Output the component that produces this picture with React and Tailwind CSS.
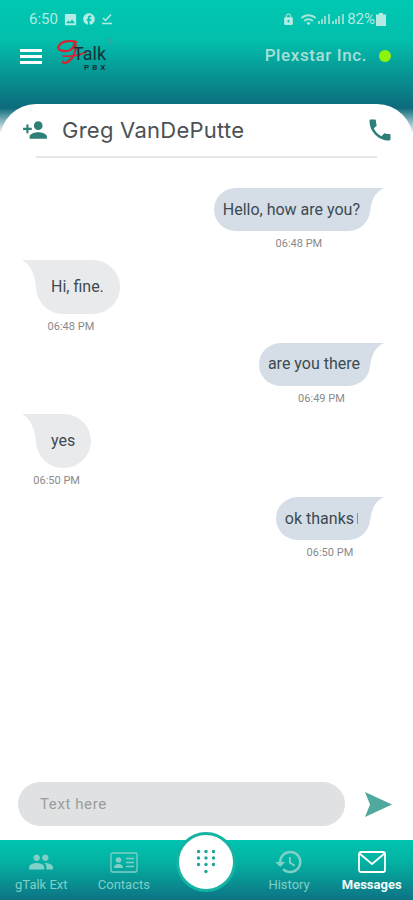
import React from "react";
import { MdPersonAdd, MdLocalPhone, MdPeople, MdHistory, MdFacebook, MdImage, MdLock, MdWifi } from "react-icons/md";

const messages = [
  { id: 1, mine: true, text: "Hello, how are you?", time: "06:48 PM" },
  { id: 2, mine: false, text: "Hi, fine.", time: "06:48 PM" },
  { id: 3, mine: true, text: "are you there", time: "06:49 PM" },
  { id: 4, mine: false, text: "yes", time: "06:50 PM" },
  { id: 5, mine: true, text: "ok thanks", time: "06:50 PM", cursor: true },
];

function Signal() {
  return (
    <svg width="14" height="12" viewBox="0 0 14 12" fill="#8fdcd0">
      <rect x="1" y="8" width="2" height="3" />
      <rect x="4" y="6" width="2" height="5" />
      <rect x="7" y="3" width="2" height="8" />
      <rect x="11" y="1" width="2" height="10" />
    </svg>
  );
}

function StatusBar() {
  return (
    <div className="flex h-[38px] items-center justify-between pl-[29px] pr-[27px] text-[#b4ebe2]">
      <div className="flex items-center">
        <span className="text-[15px] leading-none">6:50</span>
        <MdImage size={15} className="ml-[5px]" />
        <MdFacebook size={14} className="ml-[4px]" />
        <svg width="12" height="12" viewBox="0 0 12 12" className="ml-[5px]" fill="none" stroke="#b4ebe2" strokeWidth="1.5">
          <path d="M2 5l2.500 2.500L10 1.500" />
          <path d="M1 10.500h10" />
        </svg>
      </div>
      <div className="flex items-center">
        <MdLock size={13} />
        <MdWifi size={17} className="ml-[5px] text-[#a8e6dc]" />
        <Signal />
        <Signal />
        <span className="ml-[2px] text-[15px] leading-none">82%</span>
        <svg width="10" height="13" viewBox="0 0 10 13" className="ml-[1px]" fill="#b4ebe2">
          <path d="M3 0h4v1.500h3V13H0V1.500h3z" />
        </svg>
      </div>
    </div>
  );
}

function Logo() {
  return (
    <div className="relative ml-[15px] h-[34px] w-[52px] font-[Roboto,sans-serif]">
      <svg className="absolute left-0 top-0" width="36" height="32" viewBox="0 0 36 32" fill="none" stroke="#d8232f" strokeWidth="2.200" strokeLinecap="round">
        <path d="M19 3C14 1 4 2 1.500 7.500 0 11 6 13 12 11.500 16 10 18 6 17 3" />
        <path d="M17 3C21 8 18 14 15 19 11 24 7 25 6 23" />
        <path d="M6 17C13 17.500 22 17 29 13" strokeWidth="1.500" />
      </svg>
      <span className="absolute left-[16px] top-[4px] text-[18px] leading-[22px] text-[#17323a]">Talk</span>
      <span className="absolute left-[27px] top-[24px] text-[8px] font-bold leading-[9px] tracking-[3px] text-[#17323a]">PBX</span>
      <span className="absolute left-[50px] top-[-1px] text-[7px] leading-[8px] text-[#4f9c97]">®</span>
    </div>
  );
}

function Tail({ mine, color }) {
  if (mine) {
    return (
      <svg className="absolute right-0 top-0" width="15" height="24" viewBox="0 0 15 24" fill={color}>
        <path d="M0 0H15Q3 5 1 24H0Z" />
      </svg>
    );
  }
  return (
    <svg className="absolute left-0 top-0" width="15" height="28" viewBox="0 0 15 28" fill={color}>
      <path d="M15 0H0Q12 6 14 28H15Z" />
    </svg>
  );
}

function Message({ msg }) {
  const { mine, text, time, cursor } = msg;
  return (
    <div className={`flex w-fit flex-col items-center ${mine ? "self-end" : "self-start"}`}>
      {mine ? (
        <div className="relative pr-[14px]">
          <Tail mine color="#d5dee6" />
          <div className="flex h-[43px] items-center rounded-l-[22px] rounded-br-[22px] bg-[#d5dee6] pl-[9px] pr-[10px] text-[16px] text-[#3c4a52]">
            {text}
            {cursor && <span className="ml-[3px] mr-[2px] h-[11px] w-[1px] bg-[#8a949a]" />}
          </div>
        </div>
      ) : (
        <div className="relative pl-[14px]">
          <Tail color="#e9eaec" />
          <div className="flex h-[54px] items-center rounded-r-[27px] rounded-bl-[27px] bg-[#e9eaec] pl-[15px] pr-[16px] text-[16px] text-[#3f4a50]">
            {text}
          </div>
        </div>
      )}
      <span className="mt-[6px] h-[14px] text-[11px] leading-[14px] text-[#8a8a8a]">{time}</span>
    </div>
  );
}

function ContactsIcon() {
  return (
    <svg width="28" height="21" viewBox="0 0 28 21" fill="none" stroke="#7fd0c6" strokeWidth="1.300">
      <rect x="1" y="1" width="26" height="19" rx="1.500" />
      <circle cx="8.500" cy="8" r="2.800" fill="#7fd0c6" stroke="none" />
      <path d="M4 16c0-3 2-4 4.500-4s4.500 1 4.500 4z" fill="#7fd0c6" stroke="none" />
      <path d="M16 6.500h8M16 10.500h8M16 14.500h8" />
    </svg>
  );
}

function MailIcon() {
  return (
    <svg width="28" height="22" viewBox="0 0 28 22" fill="none" stroke="#ffffff" strokeWidth="1.800">
      <rect x="1" y="1" width="26" height="20" rx="2" />
      <path d="M1.500 2.500L14 13 26.500 2.500" />
    </svg>
  );
}

function DialpadIcon() {
  const dots = [];
  [1.5, 8, 14.5].forEach((y) => {
    [1.5, 9, 16.5].forEach((x) => {
      dots.push(<circle key={`${x}-${y}`} cx={x} cy={y} r="1.700" />);
    });
  });
  return (
    <svg width="18" height="24" viewBox="0 0 18 24" fill="#1fa597">
      {dots}
      <circle cx="9" cy="21.500" r="1.700" />
    </svg>
  );
}

function NavItem({ icon, label, active }) {
  return (
    <div className="flex flex-col items-center">
      <div className="flex h-[22px] items-center justify-center">{icon}</div>
      <span className={`mt-[4px] whitespace-nowrap text-[13px] leading-[16px] ${active ? "font-bold text-[#f2fbfa]" : "text-[#7fd0c6]"}`}>
        {label}
      </span>
    </div>
  );
}

export default function App() {
  return (
    <div className="flex h-[900px] w-[413px] flex-col overflow-hidden bg-white font-[Roboto,sans-serif]">
      {/* Header, runs on behind the card corners */}
      <div className="h-[140px] shrink-0 bg-[linear-gradient(180deg,#00c8b3_0px,#02bfac_40px,#0c6b7c_108px,#ffffff_134px)]">
        <StatusBar />
        <div className="flex h-[36px] items-center pl-[20px] pr-[22px]">
          <div className="flex w-[22px] flex-col gap-[3px]">
            <div className="h-[3px] bg-white" />
            <div className="h-[3px] bg-white" />
            <div className="h-[3px] bg-white" />
          </div>
          <Logo />
          <span className="ml-auto text-[17px] font-medium tracking-[0.6px] text-[#a6e0d8]">Plexstar Inc.</span>
          <span className="ml-[12px] h-[12px] w-[12px] rounded-full bg-[#8ef30b]" />
        </div>
      </div>

      {/* Chat card */}
      <div className="mt-[-36px] flex min-h-0 flex-1 flex-col rounded-t-[36px] bg-white">
        <div className="mx-[36px] flex h-[54px] shrink-0 items-center border-b-2 border-[#e4e6e6]">
          <MdPersonAdd size={26} className="ml-[-14px] text-[#2d7f77]" />
          <span className="ml-[14px] font-[Inter,sans-serif] text-[22px] tracking-[0.25px] text-[#4b5155]">Greg VanDePutte</span>
          <MdLocalPhone size={28} className="ml-auto mr-[-17px] text-[#2d7f77]" />
        </div>

        <div className="flex flex-1 flex-col gap-[8.75px] pl-[22px] pr-[29px] pt-[30px]">
          {messages.map((m) => (
            <Message key={m.id} msg={m} />
          ))}
        </div>

        <div className="flex shrink-0 items-center pb-[14px] pl-[18px] pr-[21px]">
          <div className="flex h-[44px] w-[327px] items-center rounded-[22px] bg-[#dfe1e3] pl-[22px] text-[15px] tracking-[0.6px] text-[#9b9b9b]">
            Text here
          </div>
          <svg width="27" height="25" viewBox="0 0 27 25" className="ml-auto" fill="#4fa99c">
            <path d="M0 0L27 12.500 0 25 5 12.500Z" />
          </svg>
        </div>
      </div>

      {/* Bottom nav */}
      <div className="grid h-[60px] shrink-0 grid-cols-5 bg-[linear-gradient(180deg,#00c4b0_0%,#03b3a3_35%,#0d7384_100%)] pt-[11px]">
        <NavItem icon={<MdPeople size={26} className="text-[#7fd0c6]" />} label="gTalk Ext" />
        <NavItem icon={<ContactsIcon />} label="Contacts" />
        <div className="flex justify-center">
          <div className="mt-[-19px] flex h-[60px] w-[60px] items-center justify-center rounded-full border-[3px] border-[#14b3a3] bg-white">
            <DialpadIcon />
          </div>
        </div>
        <NavItem icon={<MdHistory size={30} className="text-[#7fd0c6]" />} label="History" />
        <NavItem icon={<MailIcon />} label="Messages" active />
      </div>
    </div>
  );
}
